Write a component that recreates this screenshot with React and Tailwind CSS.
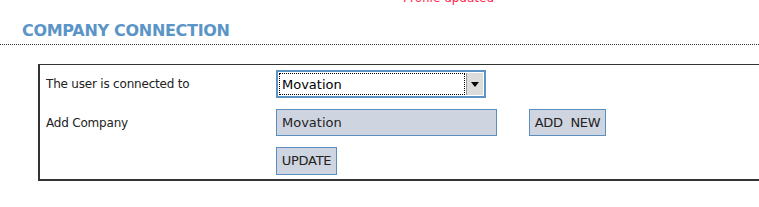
import React, { useState } from 'react';

function App() {
  const [company, setCompany] = useState('Movation');
  const [newCompany, setNewCompany] = useState('Movation');

  return (
    <div className="w-[759px] h-[207px] bg-white overflow-hidden relative" style={{ fontFamily: '"DejaVu Sans", Verdana, sans-serif' }}>
      {/* Status message */}
      <div className="h-[16px] -mt-[10px] pl-[403px] text-[12px] leading-[16px] text-[#ff1f4f]">Profile updated</div>

      {/* Section title */}
      <h2 className="mt-[16px] pl-[22px] text-[16px] leading-[18px] font-bold text-[#5b94c6] tracking-[-0.3px]">
        COMPANY CONNECTION
      </h2>
      <div className="mt-[4px] border-t border-dotted border-[#333]" />

      {/* Form box */}
      <div className="ml-[38px] mt-[19px] w-[740px] border-t-[1.5px] border-l-2 border-b-2 border-[#333] pt-[5px] pb-[4px]">
        <div className="flex items-center h-[28px]">
          <div className="w-[236px] pl-[6px] text-[12px] text-[#222] tracking-[-0.2px]">The user is connected to</div>
          <div className="relative w-[210px] h-[28px] border-2 border-[#5b93c5] bg-white">
            <div className="absolute inset-[1px] right-[19px] border border-dotted border-black" />
            <select
              value={company}
              onChange={e => setCompany(e.target.value)}
              className="appearance-none w-full h-full bg-transparent pl-[4px] text-[13px] text-black outline-none relative"
            >
              <option>Movation</option>
            </select>
            <div className="absolute right-[1px] top-[1px] bottom-[1px] w-[17px] bg-[#dcdcdc] border-l border-[#999] flex items-center justify-center pointer-events-none">
              <div className="w-0 h-0 border-l-[4px] border-r-[4px] border-t-[5px] border-l-transparent border-r-transparent border-t-black" />
            </div>
          </div>
        </div>

        <div className="flex items-center h-[27px] mt-[11px]">
          <div className="w-[236px] pl-[6px] text-[12px] text-[#222] tracking-[-0.2px]">Add Company</div>
          <input
            value={newCompany}
            onChange={e => setNewCompany(e.target.value)}
            className="w-[221px] h-[27px] bg-[#cfd5e0] border border-[#5a8fc0] pl-[5px] text-[13px] text-[#222] outline-none"
          />
          <button className="ml-[32px] w-[77px] h-[27px] bg-[#cfd5e0] border border-[#5a8fc0] text-[13px] text-[#222] tracking-[-0.3px]">
            ADD&nbsp; NEW
          </button>
        </div>

        <div className="flex items-center h-[28px] mt-[11px] pl-[236px]">
          <button className="w-[61px] h-[28px] bg-[#cfd5e0] border border-[#5a8fc0] text-[13px] text-[#222] tracking-[-0.3px]">
            UPDATE
          </button>
        </div>
      </div>
    </div>
  );
}

export default App;
